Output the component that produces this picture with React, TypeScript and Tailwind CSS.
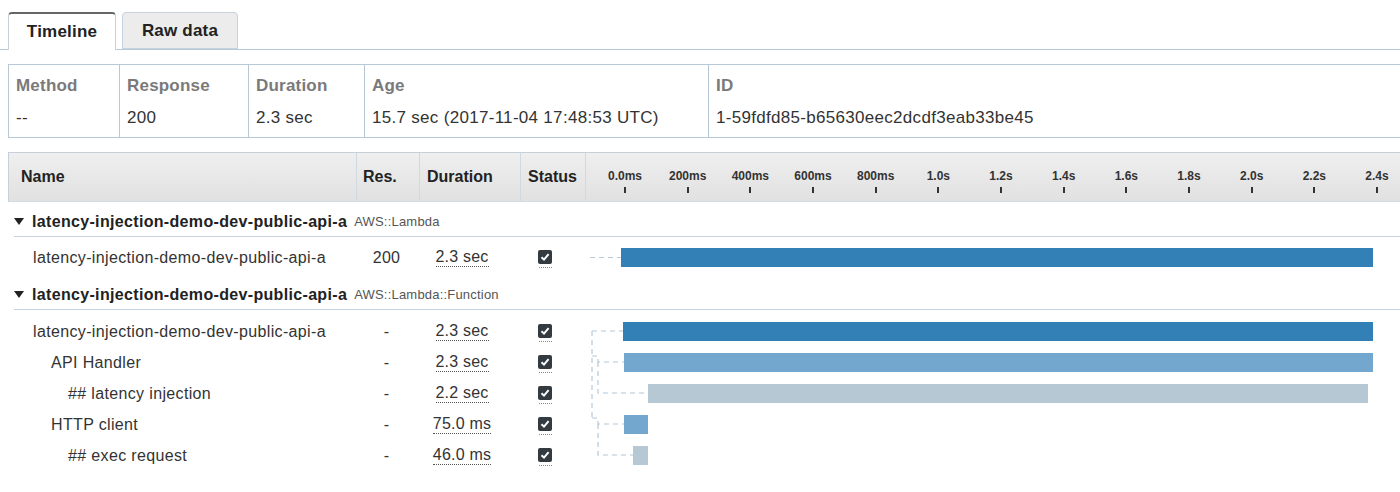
import React from 'react';

type Row = {
  name: string;
  indent: number;
  res: string;
  duration: string;
  left: number;
  width: number;
  color: string;
};

const ticks = ['0.0ms', '200ms', '400ms', '600ms', '800ms', '1.0s', '1.2s', '1.4s', '1.6s', '1.8s', '2.0s', '2.2s', '2.4s'];

const lambdaRows: Row[] = [
  { name: 'latency-injection-demo-dev-public-api-a', indent: 0, res: '200', duration: '2.3 sec', left: 37, width: 752, color: 'bg-[#3280b5]' },
];

const functionRows: Row[] = [
  { name: 'latency-injection-demo-dev-public-api-a', indent: 0, res: '-', duration: '2.3 sec', left: 39, width: 750, color: 'bg-[#3280b5]' },
  { name: 'API Handler', indent: 18, res: '-', duration: '2.3 sec', left: 40, width: 749, color: 'bg-[#74a7cd]' },
  { name: '## latency injection', indent: 35, res: '-', duration: '2.2 sec', left: 64, width: 720, color: 'bg-[#b6c8d4]' },
  { name: 'HTTP client', indent: 18, res: '-', duration: '75.0 ms', left: 40, width: 24, color: 'bg-[#74a7cd]' },
  { name: '## exec request', indent: 35, res: '-', duration: '46.0 ms', left: 49, width: 15, color: 'bg-[#b6c8d4]' },
];

function Checkbox() {
  return (
    <span className="inline-flex flex-col items-center gap-[3px] pt-[3px]">
      <span className="w-[14px] h-[14px] rounded-[2px] bg-[#333a40] flex items-center justify-center">
        <svg width="10" height="10" viewBox="0 0 10 10">
          <path d="M1.5 5.2 L4 7.6 L8.6 2.2" fill="none" stroke="#fff" strokeWidth="2" />
        </svg>
      </span>
      <span className="w-[13px] border-b border-dotted border-[#888]" />
    </span>
  );
}

function Caret() {
  return (
    <svg width="10" height="7" viewBox="0 0 10 7" className="mr-[8px]">
      <path d="M0 0 H10 L5 7 Z" fill="#222" />
    </svg>
  );
}

function DataRow({ row, lead }: { row: Row; lead?: boolean }) {
  return (
    <div className="flex h-[31px] items-center text-[16px] text-[#333]">
      <div className="w-[347px] pl-[25px] whitespace-nowrap tracking-[0.35px]">
        <span style={{ paddingLeft: row.indent }}>{row.name}</span>
      </div>
      <div className="w-[63px] flex justify-center tracking-[0.3px]">{row.res}</div>
      <div className="w-[101px] flex justify-center pr-[13px]">
        <span className="border-b border-dotted border-[#555] leading-[18px] tracking-[0.2px]">{row.duration}</span>
      </div>
      <div className="w-[65px] pl-[19px] flex items-center">
        <Checkbox />
      </div>
      <div className="relative flex-1 h-full">
        {lead && (
          <svg className="absolute left-0 top-0" width="40" height="31">
            <path d="M6 15.5 H37" stroke="#b8c8d6" strokeWidth="1.2" strokeDasharray="5 4" fill="none" />
          </svg>
        )}
        <div
          className={`absolute top-[6px] h-[19px] ${row.color}`}
          style={{ left: row.left, width: row.width }}
        />
      </div>
    </div>
  );
}

function GroupHeader({ name, kind }: { name: string; kind: string }) {
  return (
    <div className="h-[35px] pt-[5px] ml-[6px] flex items-center border-b border-[#c5d3e0]">
      <Caret />
      <span className="text-[16px] font-bold text-[#222] tracking-[0.33px]">{name}</span>
      <span className="ml-[7px] text-[13px] text-[#555] tracking-[0.2px]">{kind}</span>
    </div>
  );
}

export default function App() {
  return (
    <div className="w-[1400px] h-[492px] overflow-hidden bg-white font-['Liberation_Sans',Arial,sans-serif]">
      <div className="w-[1430px]">
        {/* Tabs */}
        <div className="pt-[12px] pl-[8px] flex gap-[6px] border-b border-[#b8c8d6] h-[50px]">
          <div className="w-[108px] h-[38px] -mb-px bg-white border-x border-[#c5d0da] border-t-2 border-t-[#666] rounded-t-[4px] flex items-center justify-center text-[17px] font-bold text-[#222] tracking-[0.2px]">
            Timeline
          </div>
          <div className="w-[116px] h-[37px] bg-[#ececec] border border-[#c5d3e0] rounded-t-[4px] flex items-center justify-center text-[17px] font-bold text-[#222] tracking-[0.2px]">
            Raw data
          </div>
        </div>

        {/* Summary */}
        <div className="mt-[14px] ml-[8px] h-[74px] border border-[#b8c8d6] flex">
          {[
            { label: 'Method', value: '--', w: 'w-[110px]' },
            { label: 'Response', value: '200', w: 'w-[129px]' },
            { label: 'Duration', value: '2.3 sec', w: 'w-[116px]' },
            { label: 'Age', value: '15.7 sec (2017-11-04 17:48:53 UTC)', w: 'w-[344px]' },
            { label: 'ID', value: '1-59fdfd85-b65630eec2dcdf3eab33be45', w: 'flex-1' },
          ].map((c, i) => (
            <div key={c.label} className={`${c.w} ${i > 0 ? 'border-l border-[#b8c8d6]' : ''} pl-[7px] pt-[11px] flex flex-col gap-[13px]`}>
              <span className="text-[17px] font-bold text-[#7a7a7a] leading-[19px] tracking-[0.2px]">{c.label}</span>
              <span className="text-[17px] text-[#333] leading-[19px] tracking-[0.3px]">{c.value}</span>
            </div>
          ))}
        </div>

        {/* Main table header */}
        <div className="mt-[14px] ml-[8px] h-[50px] flex bg-gradient-to-b from-[#efefef] to-[#e1e1e1] border-t border-l border-[#c5d0da] border-b border-b-[#d3dce4] text-[16px] font-bold text-[#222]">
          <div className="w-[347px] pl-[12px] flex items-center">Name</div>
          <div className="w-[63px] pl-[6px] flex items-center border-l border-[#cfd9e2]">Res.</div>
          <div className="w-[101px] pl-[7px] flex items-center border-l border-[#cfd9e2]">Duration</div>
          <div className="w-[65px] pl-[7px] flex items-center border-l border-[#cfd9e2]">Status</div>
          <div className="flex-1 relative border-l border-[#cfd9e2]">
            {ticks.map((t, i) => (
              <div
                key={t}
                className="absolute top-[16px] w-[60px] -ml-[30px] flex flex-col items-center"
                style={{ left: 39 + i * 62.67 }}
              >
                <span className="text-[12px] font-bold text-[#333] leading-[14px]">{t}</span>
                <span className="mt-[4px] w-[2px] h-[6px] bg-[#333]" />
              </div>
            ))}
          </div>
        </div>

        {/* Body */}
        <div className="ml-[8px]">
          <GroupHeader name="latency-injection-demo-dev-public-api-a" kind="AWS::Lambda" />
          <div className="h-[38px] pt-[5px]">
            <DataRow row={lambdaRows[0]} lead />
          </div>
          <GroupHeader name="latency-injection-demo-dev-public-api-a" kind="AWS::Lambda::Function" />
          <div className="relative pt-[6px]">
            {functionRows.map((r, i) => (
              <DataRow key={i} row={r} />
            ))}
            <svg className="absolute left-[576px] top-0" width="80" height="170">
              <g stroke="#b8c8d6" strokeWidth="1.2" strokeDasharray="5 4" fill="none">
                <path d="M8 21 H39" />
                <path d="M8 21 V108" />
                <path d="M8 46 H14 V52 H40" />
                <path d="M14 52 V83 H64" />
                <path d="M8 108 H14 V114 H40" />
                <path d="M14 114 V145 H49" />
              </g>
            </svg>
          </div>
        </div>
      </div>
    </div>
  );
}
